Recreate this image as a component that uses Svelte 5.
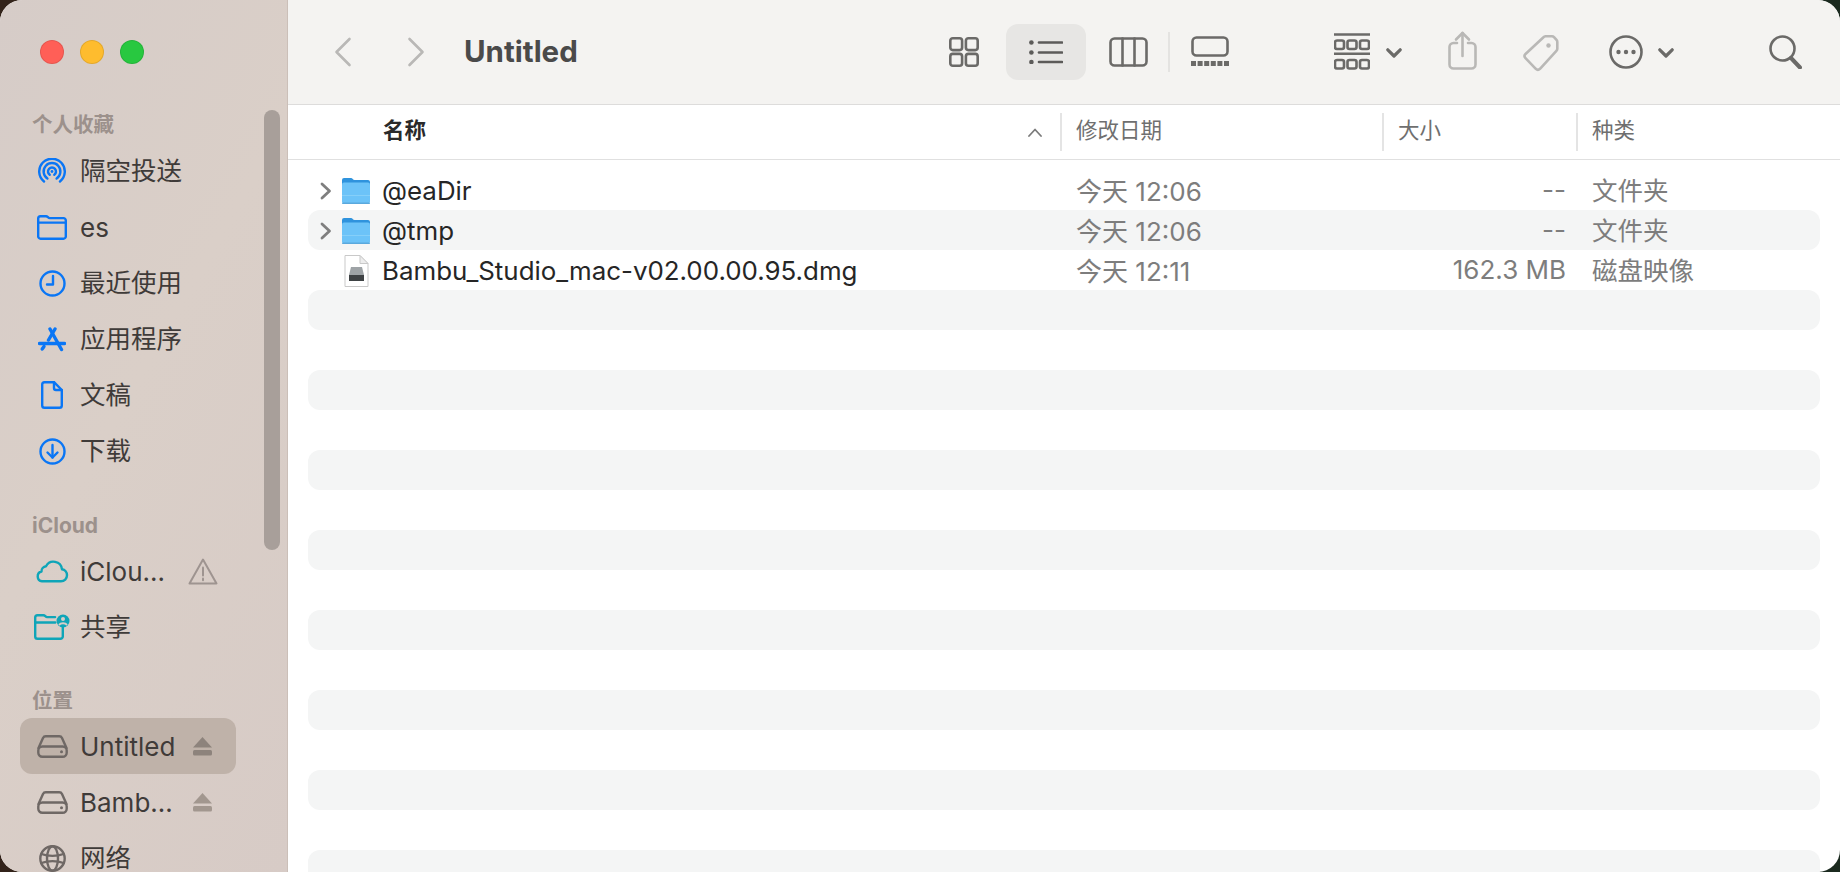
<script>
	const favorites = [
		{ icon: 'airdrop', label: '隔空投送' },
		{ icon: 'folder', label: 'es' },
		{ icon: 'clock', label: '最近使用' },
		{ icon: 'apps', label: '应用程序' },
		{ icon: 'doc', label: '文稿' },
		{ icon: 'download', label: '下载' }
	];
	const files = [
		{ name: '@eaDir', date: '今天 12:06', size: '--', kind: '文件夹', dir: true },
		{ name: '@tmp', date: '今天 12:06', size: '--', kind: '文件夹', dir: true },
		{ name: 'Bambu_Studio_mac-v02.00.00.95.dmg', date: '今天 12:11', size: '162.3 MB', kind: '磁盘映像', dir: false }
	];
	// the list keeps striping below the last file, down past the window edge
	const rows = [...files, ...Array(15).fill(null)];
	// CJK glyphs sit low in a line box set up for Inter
	const isCjk = (text) => /[\u4e00-\u9fff]/.test(text);
</script>

{#snippet sideIcon(icon)}
	<span class="side-icon">
		{#if icon === 'airdrop'}
			<svg class="blue" width="28" height="27" viewBox="0 0 28 27"><path d="M6 23.500a12.800 12.800 0 1 1 16 0" /><path d="M9.400 20.500a8.400 8.400 0 1 1 9.200 0" /><path d="M11.700 16.800a4 4 0 1 1 4.600 0" /><circle class="solid" cx="14" cy="13.500" r="1.400" /></svg>
		{:else if icon === 'folder'}
			<svg class="blue" width="30" height="25" viewBox="0 0 30 25"><path d="M1.200 8V3.500a2.300 2.300 0 0 1 2.300-2.300h5.600c1.600 0 2 1.900 3.600 1.900h13.800a2.300 2.300 0 0 1 2.300 2.300v16a2.300 2.300 0 0 1-2.300 2.300H3.500a2.300 2.300 0 0 1-2.300-2.300z" /><path d="M1.200 7.600h27.600" /></svg>
		{:else if icon === 'clock'}
			<svg class="blue" width="27" height="27" viewBox="0 0 27 27"><circle cx="13.500" cy="13.500" r="12" /><path d="M14 6v8.500H8" /></svg>
		{:else if icon === 'apps'}
			<svg class="blue thick" width="28" height="25" viewBox="0 0 28 25"><path d="M1.500 16.500h25" /><path d="M12 2l11.500 20.500" /><path d="M17 2l-6.500 11" /><path d="M6 19.500l-1.800 2.500" /></svg>
		{:else if icon === 'doc'}
			<svg class="blue" width="22" height="28" viewBox="0 0 22 28"><path d="M13 1.200H3.500a2.300 2.300 0 0 0-2.300 2.300v21a2.300 2.300 0 0 0 2.300 2.300h15a2.300 2.300 0 0 0 2.300-2.300V9z" /><path d="M13 1.200V7a2 2 0 0 0 2 2h5.800" /></svg>
		{:else if icon === 'download'}
			<svg class="blue" width="27" height="27" viewBox="0 0 27 27"><circle cx="13.500" cy="13.500" r="12" /><path d="M13.500 7v12.500" /><path d="M8.500 14.500l5 5 5-5" /></svg>
		{:else if icon === 'cloud'}
			<svg class="teal" width="34" height="24" viewBox="0 0 34 24"><path d="M7 22.300h19a6 6 0 0 0 6-6 6 6 0 0 0-5-6 8.500 8.500 0 0 0-16-3 5 5 0 0 0-4.500 5.200 5 5 0 0 0 .5 9.800z" /></svg>
		{:else if icon === 'shared'}
			<svg class="teal" width="36" height="26" viewBox="0 0 36 26"><path d="M1.200 8.500V3.500a2.300 2.300 0 0 1 2.300-2.300h6c1.600 0 2 1.900 3.600 1.900h8" /><path d="M1.200 8.500h20" /><path d="M1.200 8.500v14a2.300 2.300 0 0 0 2.300 2.300h23a2.300 2.300 0 0 0 2.300-2.300V13" /><circle class="solid" cx="29" cy="7" r="6.500" /><circle class="cut" cx="29" cy="5" r="2" /><path class="cut-line" d="M25.500 10.500c1-1.800 6-1.800 7 0" /></svg>
		{:else if icon === 'drive'}
			<svg class="grey" width="31" height="23" viewBox="0 0 31 23"><path d="M1.500 13L6 3a3 3 0 0 1 2.700-1.700h13.600A3 3 0 0 1 25 3l4.500 10" /><rect x="1.300" y="11.500" width="28.400" height="10.300" rx="4" /><circle class="solid" cx="24.500" cy="16.700" r="1.500" /></svg>
		{:else if icon === 'globe'}
			<svg class="grey" width="27" height="27" viewBox="0 0 27 27"><circle cx="13.500" cy="13.500" r="12.200" /><ellipse cx="13.500" cy="13.500" rx="5.500" ry="12.200" /><path d="M2.500 9c6 2.500 16 2.500 22 0" /><path d="M2.500 18c6-2.500 16-2.500 22 0" /></svg>
		{/if}
	</span>
{/snippet}

{#snippet sideRow(icon, label, selected, trailing)}
	<div class="side-row" class:selected>
		{@render sideIcon(icon)}
		<span class="side-label" class:cjk={isCjk(label)}>{label}</span>
		{#if trailing === 'warn'}
			<svg class="warn" width="30" height="27" viewBox="0 0 30 27"><path d="M15 1.500L28.500 25.500H1.500z" /><path d="M15 9.500v8" /><path d="M15 20.500v1.800" /></svg>
		{:else if trailing === 'eject'}
			<svg class="eject" width="19" height="19" viewBox="0 0 19 19"><path d="M9.500 0L19 10.500H0z" /><rect y="13" width="19" height="5.500" rx="1.500" /></svg>
		{/if}
	</div>
{/snippet}

<div class="window">
	<aside class="sidebar">
		<div class="lights">
			<span class="light red"></span>
			<span class="light yellow"></span>
			<span class="light green"></span>
		</div>

		<div class="side-title first">个人收藏</div>
		{#each favorites as item}
			{@render sideRow(item.icon, item.label)}
		{/each}

		<div class="side-title">iCloud</div>
		{@render sideRow('cloud', 'iClou…', false, 'warn')}
		{@render sideRow('shared', '共享')}

		<div class="side-title places">位置</div>
		{@render sideRow('drive', 'Untitled', true, 'eject')}
		{@render sideRow('drive', 'Bamb…', false, 'eject')}
		{@render sideRow('globe', '网络')}

		<div class="scroll-thumb"></div>
	</aside>

	<main class="main">
		<header class="toolbar">
			<div class="nav">
				<svg class="tb dim back" width="18" height="30" viewBox="0 0 18 30"><path d="M15.500 2L2.500 15l13 13" /></svg>
				<svg class="tb dim forward" width="18" height="30" viewBox="0 0 18 30"><path d="M2.500 2l13 13-13 13" /></svg>
				<span class="title">Untitled</span>
			</div>

			<svg class="tb" width="30" height="30" viewBox="0 0 30 30"><rect x="1.300" y="1.300" width="11.800" height="11.800" rx="2.500" /><rect x="16.900" y="1.300" width="11.800" height="11.800" rx="2.500" /><rect x="1.300" y="16.900" width="11.800" height="11.800" rx="2.500" /><rect x="16.900" y="16.900" width="11.800" height="11.800" rx="2.500" /></svg>
			<div class="view-active">
				<svg class="tb dark" width="34" height="24" viewBox="0 0 34 24"><circle class="solid" cx="2.400" cy="2.500" r="2.300" /><circle class="solid" cx="2.400" cy="12.500" r="2.300" /><circle class="solid" cx="2.400" cy="22" r="2.300" /><path d="M10 2.500h23" /><path d="M10 12.500h23" /><path d="M10 22h23" /></svg>
			</div>
			<svg class="tb columns" width="39" height="30" viewBox="0 0 39 30"><rect x="1.500" y="1.500" width="36" height="27" rx="4" /><path d="M13.500 1.500v27" /><path d="M25.500 1.500v27" /></svg>
			<span class="divider"></span>
			<svg class="tb gallery" width="38" height="32" viewBox="0 0 38 32"><rect x="1.500" y="1.500" width="35" height="18" rx="4" /><g class="solid"><rect y="25" width="5" height="5" /><rect x="6.600" y="25" width="5" height="5" /><rect x="13.200" y="25" width="5" height="5" /><rect x="19.800" y="25" width="5" height="5" /><rect x="26.400" y="25" width="5" height="5" /><rect x="33" y="25" width="5" height="5" /></g></svg>

			<svg class="tb group" width="36" height="37" viewBox="0 0 36 37"><path d="M0 1.500h36" /><rect x="1" y="7.500" width="9" height="8.500" rx="2" /><rect x="13.500" y="7.500" width="9" height="8.500" rx="2" /><rect x="26" y="7.500" width="9" height="8.500" rx="2" /><path d="M0 20.800h36" /><rect x="1" y="27" width="9" height="8.500" rx="2" /><rect x="13.500" y="27" width="9" height="8.500" rx="2" /><rect x="26" y="27" width="9" height="8.500" rx="2" /></svg>
			<svg class="tb chevron" width="16" height="10" viewBox="0 0 16 10"><path d="M1.800 1.800L8 8l6.200-6.200" /></svg>
			<svg class="tb dim share" width="29" height="39" viewBox="0 0 29 39"><path d="M9 12H5.500a4 4 0 0 0-4 4v17.500a4 4 0 0 0 4 4h18a4 4 0 0 0 4-4V16a4 4 0 0 0-4-4H20" /><path d="M14.500 25V2" /><path d="M8 8.500l6.500-6.500L21 8.500" /></svg>
			<svg class="tb dim tag" width="36" height="38" viewBox="0 0 36 38"><path d="M20.500 3.200a3 3 0 0 1 2-1h6.500a3 3 0 0 1 2 .9l2.500 2.800a3 3 0 0 1 .8 2v7a3 3 0 0 1-.9 2L17 34.800a3 3 0 0 1-4.200 0L2.500 24.200a3 3 0 0 1 0-4.200z" /><circle class="solid" cx="25.500" cy="11.500" r="2.200" /></svg>
			<svg class="tb more" width="34" height="34" viewBox="0 0 34 34"><circle cx="17" cy="17" r="15.500" /><circle class="solid" cx="9.500" cy="17" r="2.200" /><circle class="solid" cx="17" cy="17" r="2.200" /><circle class="solid" cx="24.500" cy="17" r="2.200" /></svg>
			<svg class="tb chevron-more" width="16" height="10" viewBox="0 0 16 10"><path d="M1.800 1.800L8 8l6.200-6.200" /></svg>
			<svg class="tb search" width="33" height="34" viewBox="0 0 33 34"><circle cx="13.500" cy="13.500" r="12" /><path class="heavy" d="M22 23l9 9.500" /></svg>
		</header>

		<div class="columns-head">
			<div class="col-name">
				<span class="head-name">名称</span>
				<svg class="sort" width="16" height="9" viewBox="0 0 16 9"><path d="M2 8l6-6.500L14 8" /></svg>
			</div>
			<div class="col-date"><span class="head-label">修改日期</span></div>
			<div class="col-size"><span class="head-label">大小</span></div>
			<div class="col-kind"><span class="head-label">种类</span></div>
		</div>

		<div class="list">
			{#each rows as row, i}
				<div class="row" class:stripe={i % 2 === 1}>
					{#if row}
						<div class="cell-name">
							<span class="disclosure">
								{#if row.dir}
									<svg width="12" height="18" viewBox="0 0 12 18"><path d="M2 2l7.500 7L2 16" /></svg>
								{/if}
							</span>
							{#if row.dir}
								<svg class="file-icon" width="30" height="28" viewBox="0 0 30 28">
									<path fill="#2f93dd" d="M1 6V3a2 2 0 0 1 2-2h7c1.500 0 2 2 3.500 2H27a2 2 0 0 1 2 2v4H1z" />
									<rect x="1" y="5.500" width="28" height="21" rx="2" fill="#6cc3f8" />
									<rect x="1" y="18" width="28" height="1" fill="#85cff9" />
									<rect x="1" y="25.500" width="28" height="1.500" rx="0.700" fill="#5aa9dd" />
								</svg>
							{:else}
								<svg class="file-icon" width="30" height="32" viewBox="0 0 30 32">
									<path fill="#fff" stroke="#c9c9c9" d="M4 .5h15l8 8V31.500H4z" />
									<path fill="#ededed" stroke="#c9c9c9" d="M19 .5V8.500h8z" />
									<path fill="#9ea3a6" d="M10 12h11l2 8H8z" />
									<rect x="8" y="20" width="15" height="6" fill="#3e4244" />
								</svg>
							{/if}
							<span class="file-name">{row.name}</span>
						</div>
						<div class="cell-date">{row.date}</div>
						<div class="cell-size">{row.size}</div>
						<div class="cell-kind">{row.kind}</div>
					{/if}
				</div>
			{/each}
		</div>
	</main>
</div>

<style>
	:global(body) {
		background: linear-gradient(90deg, #33231a, #1b2a1f);
		overflow: hidden;
	}

	.window {
		display: flex;
		width: 1840px;
		height: 872px;
		border-radius: 22px;
		overflow: hidden;
		font-family: Inter, 'Noto Sans CJK SC', sans-serif;
		background: #fff;
	}

	/* sidebar */
	.sidebar {
		position: relative;
		flex: none;
		box-sizing: border-box;
		width: 288px;
		height: 872px;
		overflow: hidden;
		padding-left: 20px;
		background: linear-gradient(120deg, #d6ccc8, #dacfc8 45%, #d7cbc6);
		border-right: 1px solid #cbbfb8;
	}

	.lights {
		display: flex;
		gap: 16px;
		padding: 40px 0 0 20px;
		height: 24px;
	}

	.light {
		box-sizing: border-box;
		width: 24px;
		height: 24px;
		border-radius: 50%;
		border: 1px solid rgba(0, 0, 0, 0.1);
	}
	.red { background: #ff5f57; }
	.yellow { background: #febc2e; }
	.green { background: #28c840; }

	.side-title {
		height: 34px;
		margin-top: 30px;
		padding-left: 12px;
		font-size: 21px;
		font-weight: 700;
		line-height: 34px;
		color: #9c918c;
	}
	.side-title.first {
		margin-top: 43px;
		height: 36px;
		line-height: 36px;
		font-size: 20.500px;
	}
	.side-title.places {
		margin-top: 29px;
		line-height: 34px;
		font-size: 20.500px;
	}

	.side-row {
		display: flex;
		align-items: center;
		width: 216px;
		height: 56px;
		border-radius: 12px;
		color: #3f3b39;
		font-size: 26px;
	}
	.side-row.selected {
		background: #bfb2a9;
	}

	.side-icon {
		display: flex;
		flex: none;
		align-items: center;
		justify-content: center;
		width: 64px;
	}

	.side-label {
		flex: 1;
		margin-left: -4px;
		white-space: nowrap;
	}
	.side-label.cjk {
		padding-bottom: 5px;
		font-size: 25.500px;
	}

	.side-icon svg {
		fill: none;
		stroke-width: 2.400;
		stroke-linecap: round;
		stroke-linejoin: round;
	}
	.blue { stroke: #0a76f5; }
	.teal { stroke: #0fa5b8; }
	.grey { stroke: #6f6865; }
	.side-icon .thick { stroke-width: 3.400; }
	.side-icon .solid { stroke: none; }
	.blue .solid { fill: #0a76f5; }
	.teal .solid { fill: #0fa5b8; }
	.grey .solid { fill: #6f6865; }
	.teal .cut { fill: #d9cec8; stroke: none; }
	.teal .cut-line { stroke: #d9cec8; stroke-width: 2; }

	.warn {
		flex: none;
		margin-right: 18px;
		fill: none;
		stroke: #9e9490;
		stroke-width: 2;
		stroke-linejoin: round;
		stroke-linecap: round;
	}

	.eject {
		flex: none;
		margin-right: 24px;
		fill: #a2978f;
	}
	.selected .eject {
		fill: #8d837c;
	}

	.scroll-thumb {
		position: absolute;
		left: 264px;
		top: 110px;
		width: 16px;
		height: 440px;
		border-radius: 8px;
		background: #a89f9a;
	}

	/* main */
	.main {
		flex: 1;
		min-width: 0;
		height: 872px;
		overflow: hidden;
	}

	.toolbar {
		display: flex;
		align-items: center;
		box-sizing: border-box;
		height: 105px;
		padding-bottom: 1px;
		background: #f4f3f1;
		border-bottom: 1px solid #dddcdb;
	}

	.nav {
		display: flex;
		align-items: center;
		flex: none;
		box-sizing: border-box;
		width: 661px;
		padding-left: 46px;
	}

	.tb {
		flex: none;
		fill: none;
		stroke: #6b6a68;
		stroke-width: 2.600;
		stroke-linecap: round;
		stroke-linejoin: round;
	}
	.tb.dim { stroke: #b9b8b6; }
	.tb.dark { stroke: #5c5b59; }
	.tb .solid { fill: #6b6a68; stroke: none; }
	.tb.dark .solid { fill: #5c5b59; }
	.tb.dim .solid { fill: #b9b8b6; }
	.tb .heavy { stroke-width: 4; }

	.forward { margin-left: 55px; }

	.title {
		margin-left: 39px;
		padding-bottom: 2px;
		font-size: 29.500px;
		font-weight: 700;
		color: #4a4a4a;
	}

	.view-active {
		display: flex;
		flex: none;
		align-items: center;
		justify-content: center;
		width: 80px;
		height: 56px;
		margin-left: 27px;
		border-radius: 12px;
		background: #e7e6e4;
	}

	.columns { margin-left: 23px; }

	.divider {
		flex: none;
		width: 2px;
		height: 40px;
		margin-left: 20px;
		background: #e4e3e1;
	}

	.gallery { margin-left: 21px; }
	.group { margin-left: 105px; }
	.chevron { margin-left: 16px; margin-top: 2px; stroke-width: 3.200; }
	.share { margin-left: 46px; margin-top: -2px; }
	.tag { margin-left: 46px; margin-top: 2px; }
	.more { margin-left: 50px; }
	.chevron-more { margin-left: 15px; margin-top: 2px; stroke-width: 3.200; }
	.search { margin-left: 95px; }

	/* column header */
	.columns-head {
		display: grid;
		grid-template-columns: 772px 322px 194px 1fr;
		align-items: center;
		box-sizing: border-box;
		height: 55px;
		border-bottom: 1px solid #e0e0e0;
		font-size: 21.500px;
		color: #6f6f6f;
	}

	.columns-head > div {
		display: flex;
		align-items: center;
		box-sizing: border-box;
		height: 38px;
	}

	.col-name {
		justify-content: space-between;
		padding: 0 17px 0 95px;
	}

	.head-name {
		padding-bottom: 7px;
		font-weight: 700;
		color: #2a2a2a;
	}

	.head-label {
		padding-bottom: 7px;
	}

	.sort {
		fill: none;
		stroke: #7b7b7b;
		stroke-width: 1.800;
		stroke-linecap: round;
		stroke-linejoin: round;
	}

	.col-date, .col-size, .col-kind {
		padding-left: 14px;
		border-left: 2px solid #e4e4e4;
	}

	/* list */
	.list {
		padding: 10px 20px 0;
	}

	.row {
		display: grid;
		grid-template-columns: 768px 300px 190px 1fr;
		align-items: center;
		height: 40px;
		font-size: 26px;
		color: #7d7d7d;
		white-space: nowrap;
	}

	.stripe {
		background: #f4f5f5;
		border-radius: 12px;
	}

	.cell-name {
		display: flex;
		align-items: center;
	}

	.cell-date {
		padding-bottom: 3px;
	}

	.cell-size {
		padding-bottom: 2px;
		text-align: right;
	}

	.cell-kind {
		padding: 0 0 4px 26px;
		font-size: 25.500px;
	}

	.disclosure {
		display: flex;
		flex: none;
		justify-content: flex-end;
		width: 24px;
		height: 18px;
	}

	.disclosure svg {
		fill: none;
		stroke: #7f7f7f;
		stroke-width: 2.800;
		stroke-linecap: round;
		stroke-linejoin: round;
	}

	.file-icon {
		flex: none;
		margin-left: 9px;
	}

	.file-name {
		margin-left: 11px;
		color: #262626;
		font-size: 25.900px;
	}
</style>
